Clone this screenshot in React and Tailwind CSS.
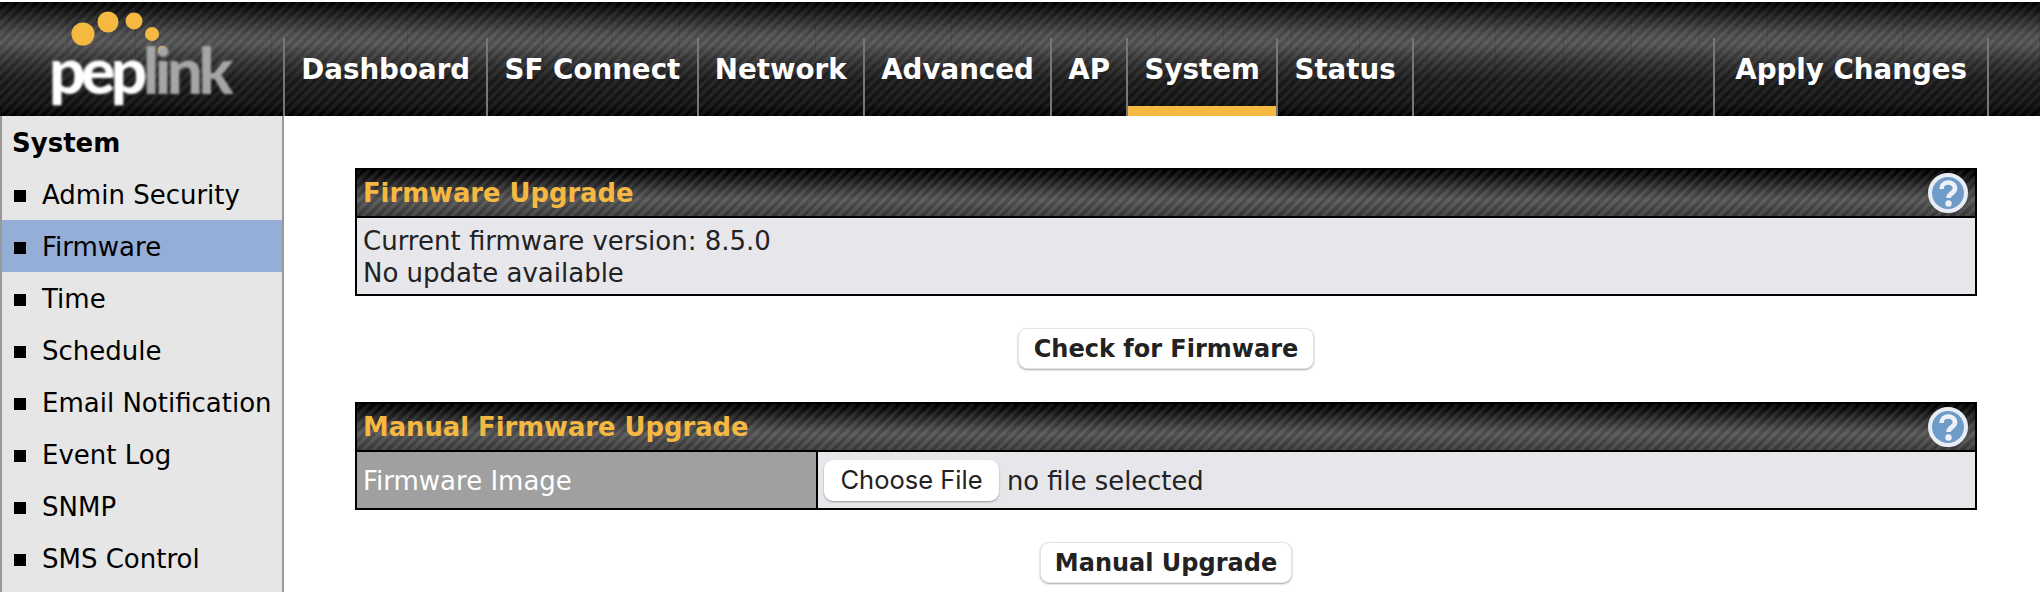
const NAV = ["Dashboard", "SF Connect", "Network", "Advanced", "AP", "System", "Status"];
const SIDE = ["Admin Security", "Firmware", "Time", "Schedule", "Email Notification", "Event Log", "SNMP", "SMS Control"];

function Logo() {
  return (
    <div className="w-[283px] h-[114px] shrink-0 relative">
      <svg className="absolute left-0 top-0" width="180" height="60" viewBox="0 0 180 60">
        <g fill="#f5b942">
          <circle cx="83" cy="32" r="11.5" />
          <circle cx="108" cy="20" r="10.5" />
          <circle cx="134" cy="19" r="8.5" />
          <circle cx="152" cy="32" r="7" />
          <circle cx="162" cy="48" r="4" />
        </g>
      </svg>
      <div className="absolute left-[49px] top-[30px] text-[64px] leading-[76px] font-black tracking-[-4.5px] blur-[0.8px] font-['Lato',sans-serif]">
        <span className="text-white">pep</span>
        <span className="text-[#a6a6a6]">link</span>
      </div>
    </div>
  );
}

function Help() {
  return (
    <svg width="40" height="40" viewBox="0 0 40 40" className="shrink-0">
      <circle cx="20" cy="20" r="18" fill="#6f9bc8" stroke="#e8edf5" strokeWidth="4" />
      <path d="M13.5 16 C13.5 7.5 27 7.5 27 15.5 C27 20.5 20.5 20 20.5 25" fill="none" stroke="#eef2f8" strokeWidth="4.6" />
      <circle cx="20.5" cy="30.5" r="3.2" fill="#eef2f8" />
    </svg>
  );
}

function PanelHeader({ title }) {
  return (
    <div className="h-12 flex items-center justify-between pl-[6px] pr-[7px] border-b-2 border-black bg-[repeating-linear-gradient(135deg,rgba(255,255,255,0.07)_0px,rgba(255,255,255,0.07)_3px,rgba(0,0,0,0.08)_4px,rgba(0,0,0,0.08)_7px),linear-gradient(to_bottom,#000_0%,#0c0c0c_12%,#444_50%,#555_65%,#3a3a3a_100%)]">
      <span className="text-[#f5b942] font-bold text-[25.8px] leading-none pt-[2px]">{title}</span>
      <Help />
    </div>
  );
}

function Btn({ children, className }) {
  return (
    <button className={"h-[41px] rounded-[9px] bg-white border border-[#e4e4e4] shadow-[0_1px_2px_rgba(0,0,0,0.35)] font-bold text-[24px] text-[#222] " + className}>
      {children}
    </button>
  );
}

export default function App() {
  return (
    <div className="w-[2040px] h-[592px] overflow-hidden bg-white pt-[2px] flex flex-col font-['DejaVu_Sans','Liberation_Sans',sans-serif]">
      <header className="h-[114px] shrink-0 flex bg-[repeating-linear-gradient(90deg,transparent_0px,transparent_67px,rgba(0,0,0,0.12)_67px,rgba(0,0,0,0.12)_68px),repeating-linear-gradient(135deg,rgba(255,255,255,0.055)_0px,rgba(255,255,255,0.055)_3px,rgba(0,0,0,0.08)_4px,rgba(0,0,0,0.08)_7px),linear-gradient(to_bottom,#000_0%,#1c1c1c_10%,#4e4e4e_28%,#555_36%,#333_52%,#1c1c1c_68%,#121212_90%,#000_100%)]">
        <Logo />
        <nav className="flex flex-1 items-end">
          {NAV.map((n, i) => (
            <a
              key={n}
              className={
                "relative h-[78px] pt-[16px] px-[16.25px] border-r-2 border-[#777] text-white font-bold text-[27.7px] leading-[32px] " +
                (i === 0 ? "border-l-2" : "")
              }
            >
              {n}
              {n === "System" && <span className="absolute left-0 right-0 bottom-0 h-[10px] bg-[#f5b942]" />}
            </a>
          ))}
          <a className="ml-auto mr-[51px] h-[78px] pt-[16px] px-[20px] border-x-2 border-[#777] text-white font-bold text-[27.7px] leading-[32px]">
            Apply Changes
          </a>
        </nav>
      </header>
      <div className="flex flex-1 min-h-0">
        <aside className="w-[284px] shrink-0 bg-[#e6e6e6] border-x-2 border-[#999]">
          <div className="h-[52px] pl-[10px] pt-[2px] flex items-center font-bold text-[26px] text-black">System</div>
          <ul>
            {SIDE.map((s) => (
              <li
                key={s}
                className={"h-[52px] pt-[2px] flex items-center text-[26px] text-black " + (s === "Firmware" ? "bg-[#95aed8]" : "")}
              >
                <span className="w-[12px] h-[12px] bg-black ml-[12px] mr-[16px] mt-[2px]" />
                {s}
              </li>
            ))}
          </ul>
        </aside>
        <main className="flex-1 pl-[71px] pr-[63px] pt-[52px] text-[26px] text-[#222]">
          <section className="border-2 border-black">
            <PanelHeader title="Firmware Upgrade" />
            <div className="bg-[#e6e6eb] h-[76px] pl-[6px] pt-[7px] leading-[32px]">
              <div>Current firmware version: 8.5.0</div>
              <div>No update available</div>
            </div>
          </section>
          <div className="flex justify-center mt-[32px] mb-[33px]">
            <Btn className="w-[296px]">Check for Firmware</Btn>
          </div>
          <section className="border-2 border-black">
            <PanelHeader title="Manual Firmware Upgrade" />
            <div className="flex h-[56px]">
              <div className="w-[461px] bg-[#a0a0a0] text-white flex items-center pl-[6px] pt-[2px] border-r-2 border-black">Firmware Image</div>
              <div className="flex-1 bg-[#e6e6eb] flex items-center pl-[6px]">
                <span className="h-[41px] w-[175px] rounded-[9px] bg-white shadow-[0_1px_2px_rgba(0,0,0,0.35)] flex items-center justify-center font-['Inter',sans-serif] text-[25.5px] text-[#222]">
                  Choose File
                </span>
                <span className="ml-[8px] pt-[2px] text-[25.8px]">no file selected</span>
              </div>
            </div>
          </section>
          <div className="flex justify-center mt-[32px]">
            <Btn className="w-[252px]">Manual Upgrade</Btn>
          </div>
        </main>
      </div>
    </div>
  );
}
